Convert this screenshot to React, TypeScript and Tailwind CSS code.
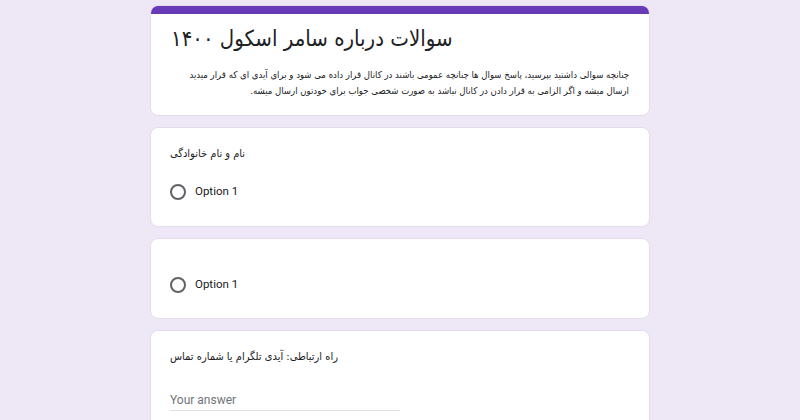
import React from "react";

function Radio() {
  return <span className="block w-[16px] h-[16px] rounded-full border-2 border-[#5f6368] shrink-0" />;
}

const fa = { fontFamily: "'DejaVu Sans Condensed', 'DejaVu Sans', sans-serif" };

export default function App() {
  return (
    <div className="min-h-[420px] w-full bg-[#ede7f6] flex justify-center pt-[5px] pb-6" style={{ fontFamily: "Roboto, 'DejaVu Sans', Arial, sans-serif" }}>
      <div className="w-[500px] flex flex-col gap-[11px]">
        <div className="bg-white rounded-[8px] overflow-hidden border border-[#e2dcee]">
          <div className="h-[8px] bg-[#673ab7]" />
          <div className="px-[20px] pt-[9px] pb-[16px]">
            <div className="text-[22px] leading-[32px] text-[#202124] whitespace-nowrap" style={fa}>سوالات درباره سامر اسکول ۱۴۰۰</div>
            <div dir="rtl" className="mt-[12px] text-[9.5px] leading-[16px] text-[#202124] whitespace-nowrap" style={fa}>
              <div>چنانچه سوالی داشتید بپرسید، پاسخ سوال ها چنانچه عمومی باشند در کانال قرار داده می شود و برای آیدی ای که قرار میدید</div>
              <div>ارسال میشه و اگر الزامی به قرار دادن در کانال نباشد به صورت شخصی جواب برای خودتون ارسال میشه.</div>
            </div>
          </div>
        </div>

        <div className="bg-white rounded-[8px] border border-[#e2dcee] px-[19px] pt-[17px] pb-[22px]">
          <div className="text-[11px] leading-[18px] text-[#202124]" style={fa}>نام و نام خانوادگی</div>
          <div className="mt-[17px] h-[24px] flex items-center gap-[9px]">
            <Radio />
            <span className="text-[11.5px] text-[#202124]">Option 1</span>
          </div>
        </div>

        <div className="bg-white rounded-[8px] border border-[#e2dcee] px-[19px] pt-[34px] pb-[21px]">
          <div className="h-[24px] flex items-center gap-[9px]">
            <Radio />
            <span className="text-[11.5px] text-[#202124]">Option 1</span>
          </div>
        </div>

        <div className="bg-white rounded-[8px] border border-[#e2dcee] px-[19px] pt-[17px] pb-[24px]">
          <div className="text-[11px] leading-[18px] text-[#202124]" style={fa}>راه ارتباطی: آیدی تلگرام یا شماره تماس</div>
          <div className="mt-[24px] w-[230px] h-[21px] border-b border-[#e0e0e0] flex items-center text-[12px] text-[#70757a]">Your answer</div>
        </div>
      </div>
    </div>
  );
}
